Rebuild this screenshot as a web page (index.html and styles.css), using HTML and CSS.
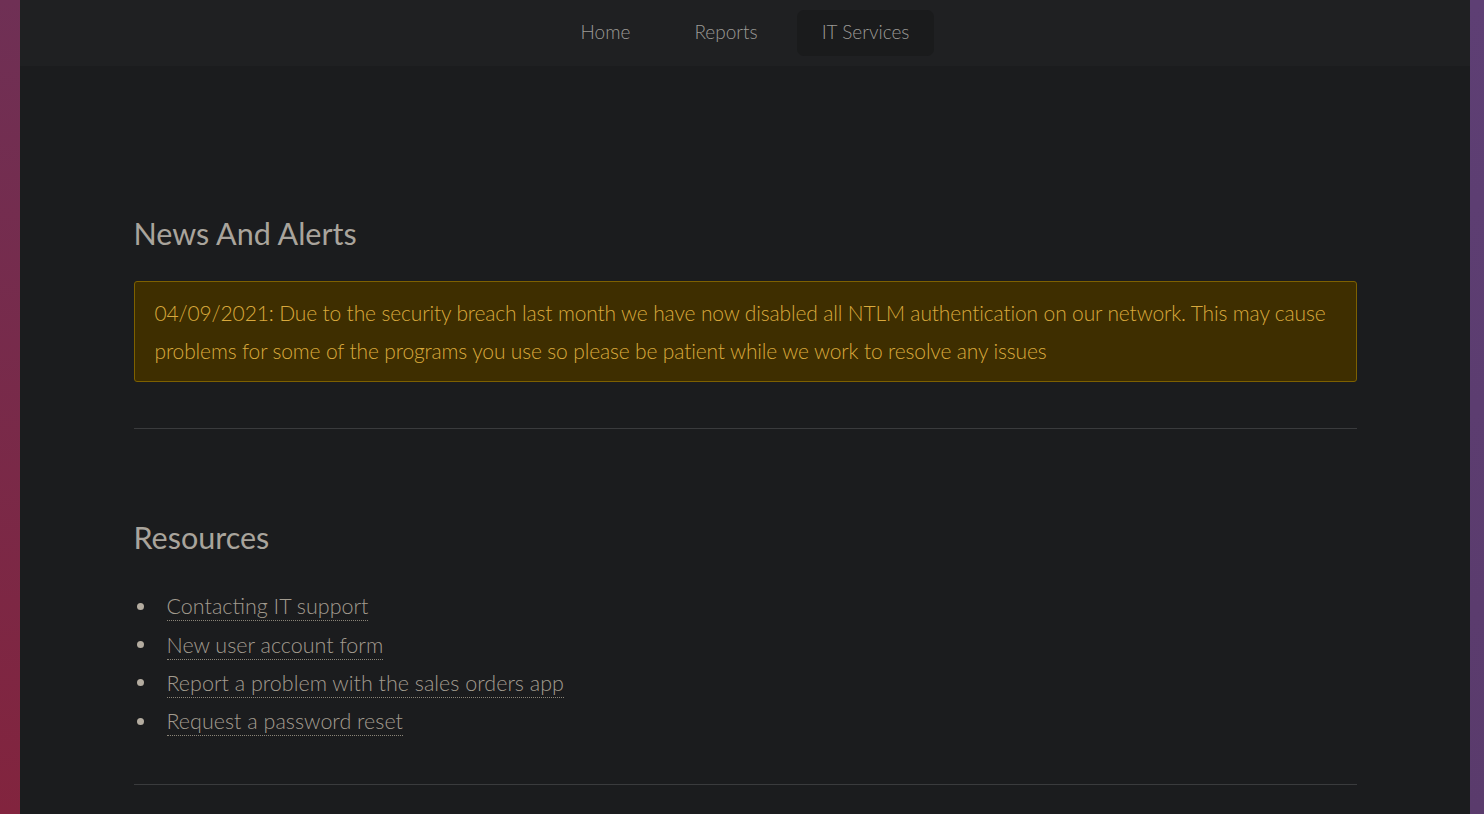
FILE: index.html
```html
<!DOCTYPE html>
<html lang="en">
<head>
<meta charset="utf-8">
<title>IT Services</title>
<link rel="stylesheet" href="styles.css">
</head>
<body>
<div class="page">
  <nav class="topnav">
    <a class="nav-item" href="#">Home</a>
    <a class="nav-item" href="#">Reports</a>
    <a class="nav-item active" href="#">IT Services</a>
  </nav>
  <main class="content">
    <h2 class="section-title">News And Alerts</h2>
    <div class="alert">04/09/2021: Due to the security breach last month we have now disabled all NTLM authentication on our network. This may cause problems for some of the programs you use so please be patient while we work to resolve any issues</div>
    <hr class="divider">
    <h2 class="section-title resources-title">Resources</h2>
    <ul class="resource-list">
      <li><a href="#">Contacting IT support</a></li>
      <li><a href="#">New user account form</a></li>
      <li><a href="#">Report a problem with the sales orders app</a></li>
      <li><a href="#">Request a password reset</a></li>
    </ul>
    <hr class="divider">
  </main>
</div>
</body>
</html>
```

FILE: styles.css
```css
html, body {
  margin: 0;
  padding: 0;
  height: 100%;
}
body {
  font-family: "Lato", "Liberation Sans", sans-serif;
  background:
    linear-gradient(to bottom, #6f3055, #82243e) left top / 20px 100% no-repeat,
    linear-gradient(to bottom, #5e3f74, #5a3b6c);
  overflow: hidden;
}
.page {
  width: 1450px;
  margin-left: 20px;
  min-height: 100%;
  background: #1b1c1e;
}
.topnav {
  height: 66px;
  background: #1f2022;
  display: flex;
  justify-content: center;
  align-items: center;
  gap: 14px;
}
.nav-item {
  display: block;
  height: 46px;
  line-height: 44px;
  padding: 0 25px;
  font-size: 19px;
  color: #9c9a96;
  text-decoration: none;
  border-radius: 7px;
  font-weight: 300;
}
.nav-item.active {
  background: #1a1b1c;
}
.content {
  width: 1223px;
  margin: 0 auto;
  padding-top: 148px;
}
.section-title {
  margin: 0 0 29px;
  font-size: 30.5px;
  line-height: 38px;
  font-weight: 400;
  color: #a9a49c;
}
.alert {
  border: 1px solid #7d6000;
  background: #3e2e00;
  color: #d9a93c;
  border-radius: 3px;
  padding: 12px 20px;
  font-size: 21px;
  letter-spacing: -0.15px;
  line-height: 37.5px;
  font-weight: 300;
}
.divider {
  border: 0;
  border-top: 1px solid #3a3b3d;
  margin: 46px 0 0;
}
.resources-title {
  margin-top: 89px;
  margin-bottom: 31px;
}
.resource-list {
  margin: 0;
  padding: 0;
  list-style: none;
}
.resource-list li {
  display: flex;
  align-items: center;
  height: 38.4px;
  font-size: 21.5px;
  font-weight: 300;
}
.resource-list li::before {
  content: "";
  width: 7px;
  height: 7px;
  border-radius: 50%;
  background: #b4aca0;
  margin: 0 23px 0 3px;
  flex: none;
}
.resource-list a {
  color: #a29b8f;
  text-decoration: none;
  border-bottom: 1px dotted #8a8478;
  line-height: 27px;
  margin-top: 2px;
}
.resource-list + .divider {
  margin-top: 43px;
}
```
